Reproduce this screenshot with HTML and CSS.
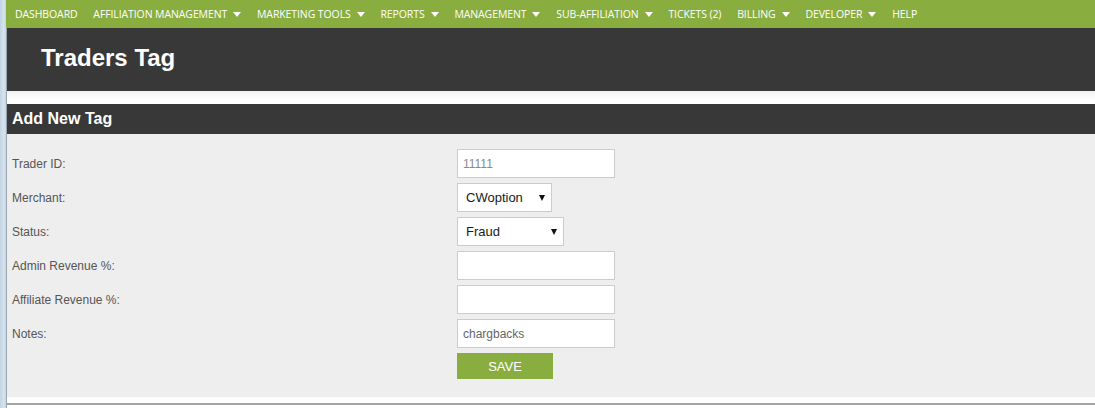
FILE: index.html
```html
<!DOCTYPE html>
<html lang="en">
<head>
<meta charset="utf-8">
<title>Traders Tag</title>
<link rel="stylesheet" href="styles.css">
</head>
<body>
<div class="frame"></div>
<div class="page">
  <nav class="topnav">
    <a class="nav-item">DASHBOARD</a>
    <a class="nav-item">AFFILIATION MANAGEMENT<svg class="caret" viewBox="0 0 8 5" width="8" height="5"><path d="M0 0H8L4 5Z"/></svg></a>
    <a class="nav-item">MARKETING TOOLS<svg class="caret" viewBox="0 0 8 5" width="8" height="5"><path d="M0 0H8L4 5Z"/></svg></a>
    <a class="nav-item">REPORTS <svg class="caret" viewBox="0 0 8 5" width="8" height="5"><path d="M0 0H8L4 5Z"/></svg></a>
    <a class="nav-item">MANAGEMENT<svg class="caret" viewBox="0 0 8 5" width="8" height="5"><path d="M0 0H8L4 5Z"/></svg></a>
    <a class="nav-item">SUB-AFFILIATION<svg class="caret" viewBox="0 0 8 5" width="8" height="5"><path d="M0 0H8L4 5Z"/></svg></a>
    <a class="nav-item">TICKETS (2)</a>
    <a class="nav-item">BILLING <svg class="caret" viewBox="0 0 8 5" width="8" height="5"><path d="M0 0H8L4 5Z"/></svg></a>
    <a class="nav-item">DEVELOPER<svg class="caret" viewBox="0 0 8 5" width="8" height="5"><path d="M0 0H8L4 5Z"/></svg></a>
    <a class="nav-item">HELP</a>
  </nav>
  <header class="page-header">
    <h1 class="page-title">Traders Tag</h1>
  </header>
  <div class="spacer"></div>
  <section class="panel">
    <h2 class="panel-title">Add New Tag</h2>
    <form class="panel-body">
      <label class="field-label">Trader ID:</label>
      <div class="field"><input class="text-input muted" type="text" value="11111"></div>

      <label class="field-label">Merchant:</label>
      <div class="field"><span class="select-wrap merchant"><select class="select"><option>CWoption</option></select></span></div>

      <label class="field-label">Status:</label>
      <div class="field"><span class="select-wrap status"><select class="select"><option>Fraud</option></select></span></div>

      <label class="field-label">Admin Revenue %:</label>
      <div class="field"><input class="text-input" type="text" value=""></div>

      <label class="field-label">Affiliate Revenue %:</label>
      <div class="field"><input class="text-input" type="text" value=""></div>

      <label class="field-label">Notes:</label>
      <div class="field"><input class="text-input" type="text" value="chargbacks"></div>

      <span></span>
      <div class="field"><button class="save-btn" type="button">SAVE</button></div>
    </form>
  </section>
  <div class="footer-gap"></div>
  <div class="footer-line"></div>
</div>
</body>
</html>
```
FILE: styles.css
```css
html, body {
  margin: 0;
  padding: 0;
  height: 100%;
  background: #ffffff;
}
body {
  display: flex;
  font-family: "Liberation Sans", Arial, sans-serif;
  overflow: hidden;
}
.frame {
  width: 6px;
  flex: none;
  background: linear-gradient(90deg, #c3d2e2 0%, #d6e3f0 60%, #c8d6e4 100%);
  border-right: 1px solid #9aa6b2;
}
.page {
  flex: 1;
  display: flex;
  flex-direction: column;
  min-width: 0;
}
.topnav {
  height: 28px;
  background: #89ad3f;
  display: flex;
  align-items: center;
  padding-left: 9px;
  gap: 15.8px;
  margin-left: -1px;
}
.nav-item {
  display: inline-flex;
  align-items: center;
  color: #ffffff;
  font-family: "Open Sans", sans-serif;
  font-size: 10.5px;
  letter-spacing: -0.1px;
  white-space: nowrap;
  line-height: 28px;
}
.caret {
  margin-left: 6px;
  fill: #ffffff;
  width: 8px;
  height: 5px;
}
.page-header {
  height: 63px;
  background: #383838;
  display: flex;
  align-items: center;
  padding-left: 34px;
}
.page-title {
  margin: 0;
  color: #ffffff;
  font-size: 24px;
  font-weight: bold;
  line-height: 1;
  padding-bottom: 4px;
}
.spacer {
  height: 13px;
  background: linear-gradient(#f1f1f1, #ffffff 70%);
}
.panel {
  background: #eeeeee;
}
.panel-title {
  margin: 0;
  height: 30px;
  background: #383838;
  color: #ffffff;
  font-size: 16px;
  font-weight: bold;
  line-height: 30px;
  padding-left: 5px;
}
.panel-body {
  display: grid;
  grid-template-columns: 445px 1fr;
  grid-auto-rows: 29px;
  row-gap: 5px;
  padding: 15px 0 15px 5px;
  align-items: center;
}
.field-label {
  font-size: 12px;
  color: #555555;
}
.field {
  display: flex;
  align-items: flex-start;
  height: 29px;
}
.text-input {
  box-sizing: border-box;
  width: 158px;
  height: 29px;
  border: 1px solid #cccccc;
  background: #ffffff;
  padding: 0 0 0 5px;
  font-family: "Liberation Sans", Arial, sans-serif;
  font-size: 12px;
  color: #666666;
  outline: none;
}
.text-input.muted {
  color: #8a8a8a;
}
.select-wrap {
  position: relative;
  display: inline-block;
}
.select-wrap::after {
  content: "";
  position: absolute;
  right: 7px;
  top: 12px;
  border-left: 3px solid transparent;
  border-right: 3px solid transparent;
  border-top: 6px solid #111111;
  pointer-events: none;
}
.select {
  -webkit-appearance: none;
  appearance: none;
  box-sizing: border-box;
  height: 29px;
  border: 1px solid #cccccc;
  border-radius: 0;
  background: #ffffff;
  padding: 0 0 0 8px;
  font-family: "Liberation Sans", Arial, sans-serif;
  font-size: 13px;
  font-weight: normal;
  color: #1a1a1a;
  outline: none;
}
.merchant .select { width: 95px; }
.status .select { width: 107px; }
.save-btn {
  width: 96px;
  height: 26px;
  border: 0;
  background: #89ad3f;
  color: #ffffff;
  font-family: "Liberation Sans", Arial, sans-serif;
  font-size: 13px;
  padding: 0;
  cursor: pointer;
}
.footer-gap {
  height: 6px;
}
.footer-line {
  height: 2px;
  background: #a5a5a5;
}
```
